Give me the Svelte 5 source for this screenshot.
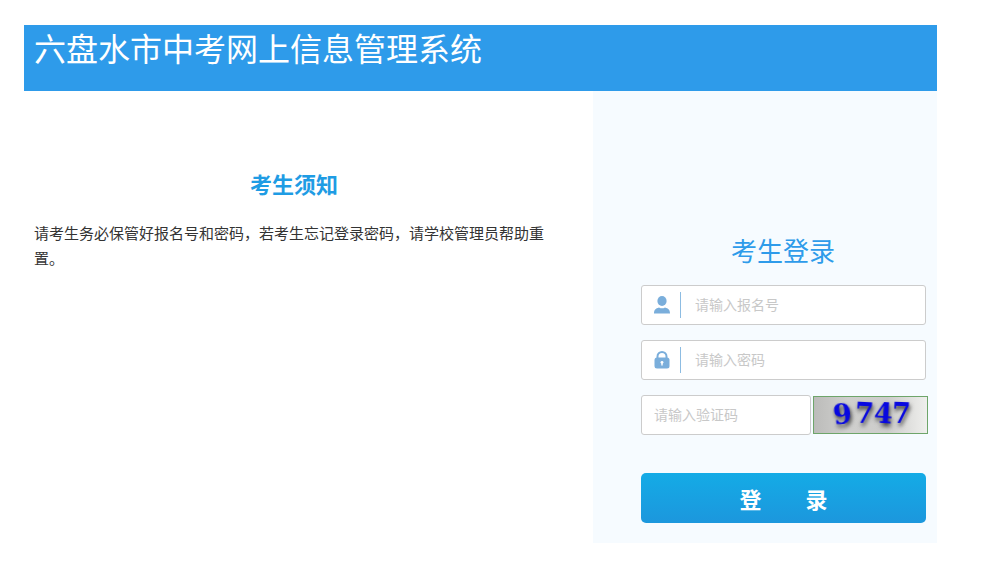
<script>
  let examNo = $state('')
  let password = $state('')
  let code = $state('')

  const digits = ['9', '7', '4', '7']
</script>

<div class="page">
  <header>六盘水市中考网上信息管理系统</header>

  <main>
    <section class="notice">
      <h2>考生须知</h2>
      <p>请考生务必保管好报名号和密码，若考生忘记登录密码，请学校管理员帮助重置。</p>
    </section>

    <section class="login">
      <h3>考生登录</h3>

      <label class="field">
        <span class="icon">
          <svg width="16" height="18" viewBox="0 0 16 18">
            <ellipse cx="8" cy="5" rx="4.6" ry="5" fill="#7aaedb" />
            <path d="M0 17.5 C0 14 1.5 12.5 5 11.5 Q8 13.2 11 11.5 C14.5 12.5 16 14 16 17.5 Z" fill="#7aaedb" />
          </svg>
        </span>
        <input type="text" placeholder="请输入报名号" bind:value={examNo} autocomplete="off" />
      </label>

      <label class="field">
        <span class="icon">
          <svg width="16" height="18" viewBox="0 0 16 18">
            <path d="M3.5 8 V5.5 A4.5 4.5 0 0 1 12.5 5.5 V8" fill="none" stroke="#7aaedb" stroke-width="2" />
            <rect x="0.5" y="6.5" width="15" height="11" rx="2.5" fill="#7aaedb" />
            <circle cx="8" cy="11.3" r="1.4" fill="#fff" />
            <rect x="7.3" y="11.5" width="1.4" height="3" fill="#fff" />
          </svg>
        </span>
        <input type="password" placeholder="请输入密码" bind:value={password} />
      </label>

      <div class="code-row">
        <input class="code" type="text" placeholder="请输入验证码" bind:value={code} autocomplete="off" />
        <div class="captcha">
          {#each digits as digit}
            <span>{digit}</span>
          {/each}
        </div>
      </div>

      <button type="button">登&emsp;&emsp;录</button>
    </section>
  </main>
</div>

<style>
  :global(body) {
    background: #fff;
    font-family: "Liberation Sans", "Noto Sans CJK SC", sans-serif;
  }

  .page {
    width: 913px;
    padding: 25px 0 0 24px;
  }

  header {
    height: 66px;
    box-sizing: border-box;
    padding: 7px 10px 0;
    background: #2e9bea;
    color: #fff;
    font-size: 32px;
    line-height: 36px;
  }

  main {
    display: flex;
  }

  .notice {
    width: 569px;
    box-sizing: border-box;
    padding: 80px 39px 0 10px;
  }

  h2 {
    margin: 0 0 20px;
    text-align: center;
    font-size: 22px;
    line-height: 30px;
    font-weight: bold;
    color: #1f9ce4;
  }

  p {
    margin: 0;
    font-size: 15px;
    line-height: 25px;
    color: #333;
  }

  .login {
    width: 344px;
    height: 452px;
    box-sizing: border-box;
    padding: 143px 11px 0 48px;
    background: #f6fbff;
  }

  h3 {
    margin: 0 0 14px;
    padding-right: 1px;
    text-align: center;
    font-size: 26px;
    line-height: 37px;
    font-weight: normal;
    color: #2e9bea;
  }

  .field {
    display: flex;
    align-items: center;
    height: 40px;
    box-sizing: border-box;
    margin-bottom: 15px;
    background: #fff;
    border: 1px solid #ccc;
    border-radius: 3px;
  }

  .icon {
    display: flex;
    align-items: center;
    justify-content: center;
    width: 37px;
    height: 26px;
    padding-left: 1px;
    margin-right: 14px;
    border-right: 1px solid #8dbce2;
  }

  input {
    border: none;
    outline: none;
    background: transparent;
    font-family: inherit;
    font-size: 14px;
    padding: 0;
    width: 200px;
    color: #333;
  }

  input::placeholder {
    color: #c8c8c8;
    opacity: 1;
  }

  .code-row {
    display: flex;
    align-items: center;
    gap: 2px;
    margin-bottom: 38px;
    width: 287px;
  }

  .code {
    width: 170px;
    height: 40px;
    box-sizing: border-box;
    padding-left: 12px;
    background: #fff;
    border: 1px solid #ccc;
    border-radius: 3px;
  }

  .captcha {
    display: flex;
    align-items: center;
    justify-content: center;
    flex-shrink: 0;
    width: 115px;
    height: 38px;
    box-sizing: border-box;
    padding: 0 0 2px 3px;
    border: 1px solid #6ea56a;
    background: linear-gradient(90deg, #bcbcba 0%, #cfcfcd 30%, #cdcdcb 65%, #efefed 100%);
    overflow: hidden;
  }

  .captcha span {
    font-family: "DejaVu Serif", serif;
    font-weight: bold;
    font-size: 27px;
    line-height: 30px;
    color: #0808e0;
    text-shadow: 1px 3px 4px #333;
    filter: blur(.45px);
  }

  .captcha span:nth-child(1) {
    transform: rotate(-6deg) translateY(1px);
    margin-right: 3px;
  }

  .captcha span:nth-child(2) {
    transform: rotate(3deg);
  }

  .captcha span:nth-child(3) {
    transform: rotate(4deg);
  }

  .captcha span:nth-child(4) {
    transform: rotate(2deg);
  }

  button {
    display: block;
    width: 285px;
    height: 50px;
    border: none;
    border-radius: 5px;
    background: linear-gradient(#14abe6, #1c97dd);
    color: #fff;
    font-family: inherit;
    font-size: 22px;
    font-weight: bold;
    padding: 0;
  }
</style>
